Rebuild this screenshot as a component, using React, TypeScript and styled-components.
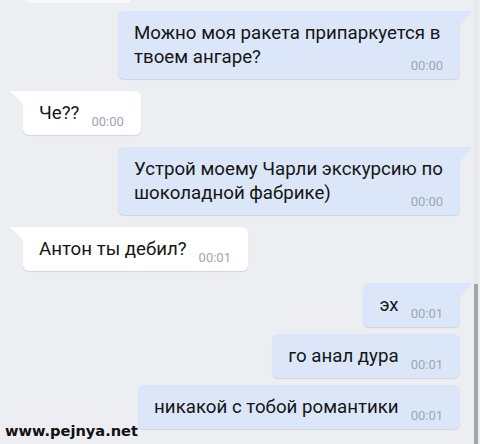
import React from 'react';
import styled, { createGlobalStyle, css } from 'styled-components';

const MESSAGES = [
  { out: true, text: 'Можно моя ракета припаркуется в твоем ангаре?', time: '00:00', tail: true },
  { out: false, text: 'Че??', time: '00:00', tail: true },
  { out: true, text: 'Устрой моему Чарли экскурсию по шоколадной фабрике)', time: '00:00', tail: true },
  { out: false, text: 'Антон ты дебил?', time: '00:01', tail: true },
  { out: true, text: 'эх', time: '00:01', tail: true },
  { out: true, text: 'го анал дура', time: '00:01', tail: false },
  { out: true, text: 'никакой с тобой романтики', time: '00:01', tail: false },
];

const GlobalStyle = createGlobalStyle`
  html, body {
    margin: 0;
    padding: 0;
    background: #edeef2;
  }
  * {
    box-sizing: border-box;
  }
`;

const Screen = styled.div`
  position: relative;
  width: 480px;
  height: 444px;
  overflow: hidden;
  background: #edeef2;
  font-family: Roboto, 'Noto Sans', Arial, sans-serif;
  display: flex;
  padding-right: 2px;
`;

const ChatList = styled.div`
  flex: 1;
  display: flex;
  flex-direction: column;
  padding: 0 14px 0 23px;
`;

const PrevBubbleEnd = styled.div`
  width: 104px;
  height: 3px;
  margin-left: 4px;
  background: #f7f8fa;
  border-radius: 0 0 6px 6px;
`;

const Row = styled.div<{ $out: boolean; $gap: number }>`
  display: flex;
  justify-content: ${(p) => (p.$out ? 'flex-end' : 'flex-start')};
  margin-top: ${(p) => p.$gap}px;
`;

const Bubble = styled.div<{ $out: boolean; $tail: boolean }>`
  position: relative;
  max-width: 342px;
  padding: 10px 17px 10px 16px;
  border-radius: 6px;
  background: ${(p) => (p.$out ? '#dbe7f8' : '#ffffff')};
  box-shadow: 0 1px 1px rgba(110, 130, 160, 0.25);
  color: #151515;
  font-size: 18.7px;
  line-height: 24px;
  display: flow-root;

  ${(p) =>
    p.$tail &&
    (p.$out
      ? css`
          border-top-right-radius: 0;
          &::before {
            content: '';
            position: absolute;
            top: 0;
            right: -12px;
            width: 12px;
            height: 15px;
            background: #dbe7f8;
            clip-path: polygon(0 0, 100% 0, 0 100%);
          }
        `
      : css`
          border-top-left-radius: 0;
          &::before {
            content: '';
            position: absolute;
            top: 0;
            left: -13px;
            width: 13px;
            height: 13px;
            background: #ffffff;
            clip-path: polygon(0 0, 100% 0, 100% 100%);
          }
        `)}
`;

const Text = styled.span``;

const Time = styled.span`
  float: right;
  margin: 13px 0 -5px 12px;
  font-size: 13px;
  line-height: 16px;
  color: #9ea6b0;
`;

const ScrollBar = styled.div`
  width: 4px;
  display: flex;
  flex-direction: column;
  justify-content: flex-end;
  background: #e6e8ec;
`;

const ScrollThumb = styled.div`
  height: 160px;
  background: #a3a5a8;
`;

const Watermark = styled.div`
  position: absolute;
  left: 5px;
  bottom: 5px;
  font-family: 'DejaVu Sans', Verdana, sans-serif;
  font-weight: bold;
  font-size: 14.6px;
  line-height: 16px;
  color: #111;
`;

const App = () => {
  return (
    <>
      <GlobalStyle />
      <Screen>
        <ChatList>
          <PrevBubbleEnd />
          {MESSAGES.map((m, idx) => {
            const prev = MESSAGES[idx - 1];
            const gap = idx === 0 ? 8 : prev.out === m.out ? 7 : 12;
            return (
              <Row key={idx} $out={m.out} $gap={gap}>
                <Bubble $out={m.out} $tail={m.tail}>
                  <Text>{m.text}</Text>
                  <Time>{m.time}</Time>
                </Bubble>
              </Row>
            );
          })}
        </ChatList>
        <ScrollBar>
          <ScrollThumb />
        </ScrollBar>
        <Watermark>www.pejnya.net</Watermark>
      </Screen>
    </>
  );
};

export default App;
